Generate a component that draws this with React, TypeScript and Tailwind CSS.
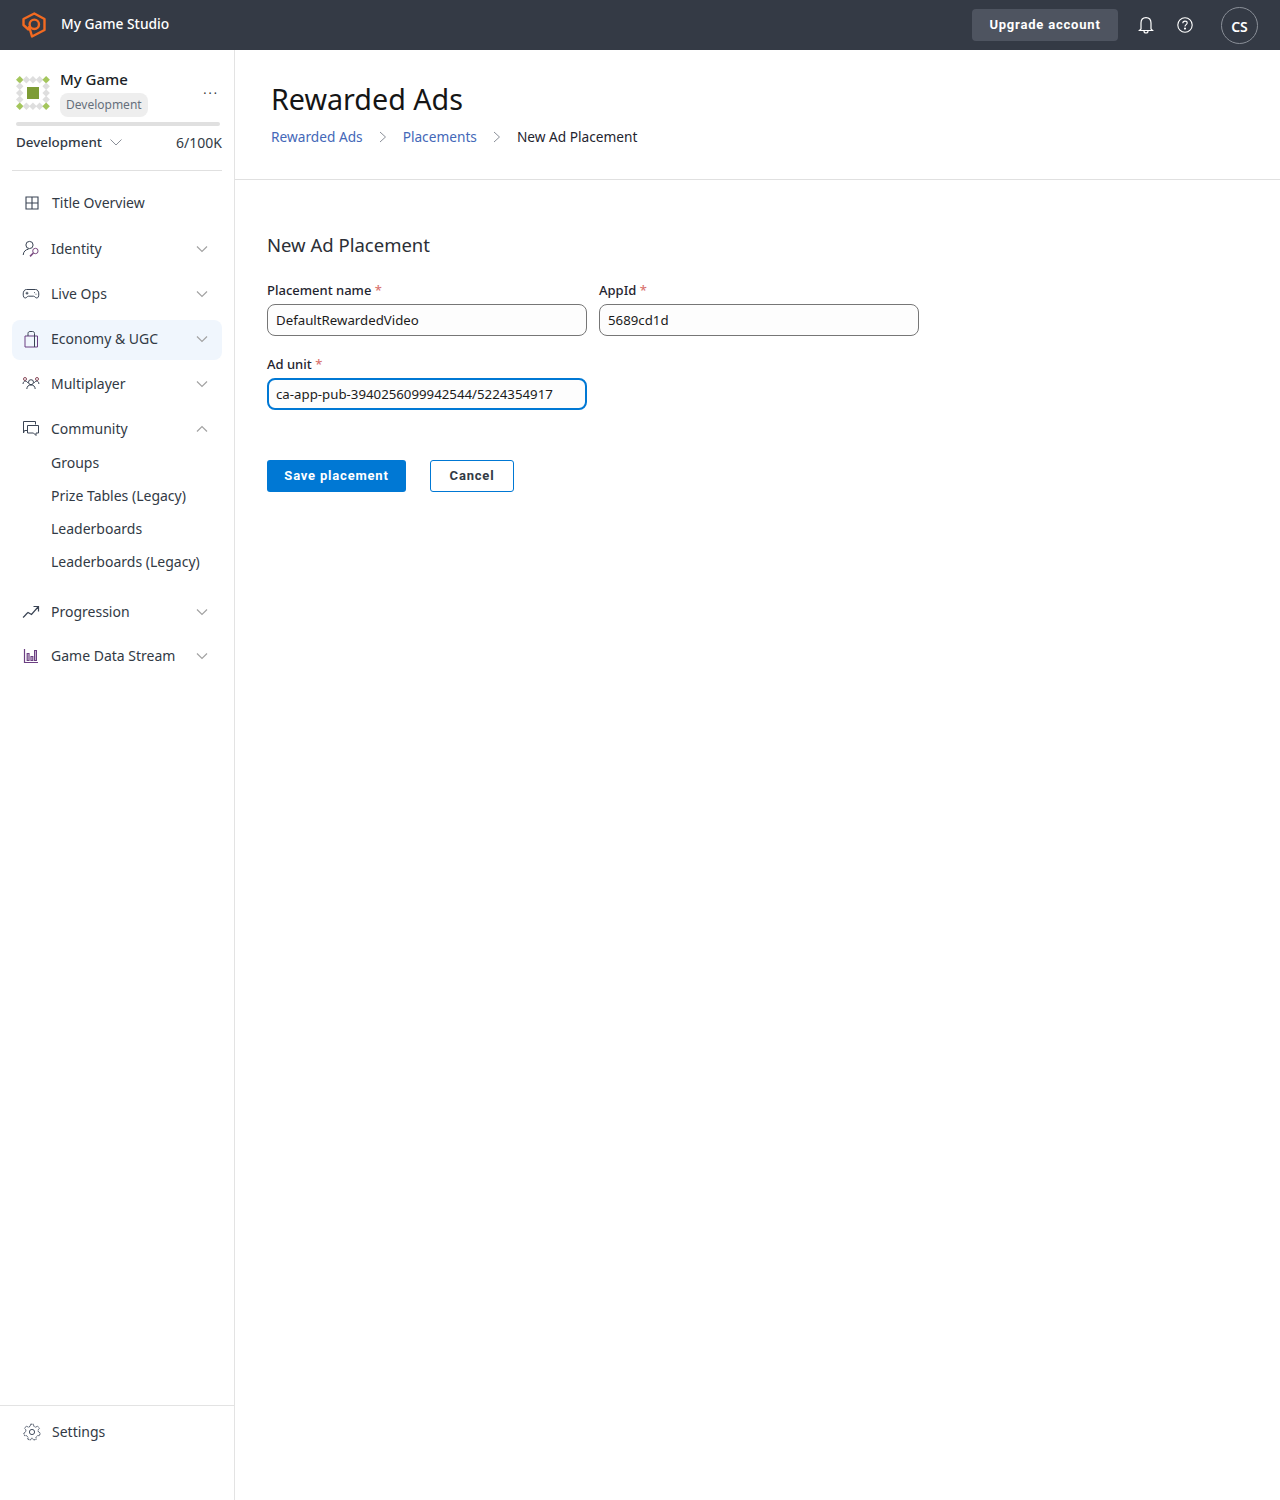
import React from "react";

const font = "font-['Noto_Sans',sans-serif]";
const btnFont = "font-['Roboto',sans-serif]";

function Chevron({ up = false }: { up?: boolean }) {
  return (
    <svg width="12" height="8" viewBox="0 0 12 8" fill="none" stroke="#a3a3a3" strokeWidth="1.2">
      <path d={up ? "M1 6.5L6 1.5L11 6.5" : "M1 1.5L6 6.5L11 1.5"} />
    </svg>
  );
}

function Logo() {
  return (
    <svg width="24" height="26" viewBox="0 0 24 26" fill="none" stroke="#f26a21" strokeWidth="2.4" strokeLinejoin="round">
      <path d="M7 18L1.5 13V7L12.3 1.5L22.5 7V18L10 24.5L7 14" />
      <circle cx="12.3" cy="12.3" r="4.7" />
    </svg>
  );
}

function GameIcon() {
  const d: [number, number, string][] = [];
  for (let i = 0; i < 5; i++) {
    for (let j = 0; j < 5; j++) {
      if (i > 0 && i < 4 && j > 0 && j < 4) continue;
      const corner = (i === 0 || i === 4) && (j === 0 || j === 4);
      d.push([3.75 + i * 6.6, 3.75 + j * 6.6, corner ? "#a4c65c" : "#dedede"]);
    }
  }
  return (
    <svg width="34" height="34" viewBox="0 0 34 34">
      {d.map(([x, y, c], i) => (
        <path key={i} d={`M${x} ${y - 3.75}L${x + 3.75} ${y}L${x} ${y + 3.75}L${x - 3.75} ${y}Z`} fill={c} />
      ))}
      <rect x="11" y="11" width="12" height="12" fill="#7d9c35" />
    </svg>
  );
}

const iconProps = {
  width: 18,
  height: 18,
  viewBox: "0 0 18 18",
  fill: "none",
  stroke: "#3a4454",
  strokeWidth: 1,
};

const icons: Record<string, React.ReactNode> = {
  overview: (
    <svg {...iconProps} width={14} height={14} viewBox="0 0 14 14" strokeWidth={1.1}>
      <path d="M1 1H13V13H1ZM7 1V13M1 7H13" />
    </svg>
  ),
  identity: (
    <svg {...iconProps}>
      <circle cx="7.5" cy="5" r="3.6" />
      <path d="M1.2 15C1.5 11.5 3.5 9.6 6.5 9.2" />
      <circle cx="13.4" cy="11" r="2.7" stroke="#7a4a80" />
      <path d="M11.4 13L8 16.4" stroke="#7a4a80" strokeWidth="1.6" />
    </svg>
  ),
  liveops: (
    <svg {...iconProps}>
      <path d="M4.5 4.5H13.5C15.6 4.5 16.8 6.4 16.8 9C16.8 11.8 16 13 14.8 13C13.4 13 12.8 11.2 11.5 11.2H6.5C5.2 11.2 4.6 13 3.2 13C2 13 1.2 11.8 1.2 9C1.2 6.4 2.4 4.5 4.5 4.5Z" />
      <path d="M3.6 8.2H6.4M5 6.8V9.6M12 7.6H12.8M13.6 9.2H14.4" />
    </svg>
  ),
  economy: (
    <svg {...iconProps}>
      <path d="M3 6H15.5V17H3Z" stroke="#6b3f82" />
      <path d="M6 6V3.5C6 2.3 6.8 1.5 8 1.5H10.5C11.8 1.5 12.5 2.3 12.5 3.5V17" stroke="#3a4454" />
    </svg>
  ),
  multiplayer: (
    <svg {...iconProps}>
      <circle cx="9" cy="7.2" r="2.5" />
      <path d="M4.8 14C5 11.2 6.5 10 9 10C11.5 10 13 11.2 13.2 14" />
      <circle cx="3" cy="4" r="1.5" stroke="#8a4a5a" />
      <circle cx="15" cy="4" r="1.5" stroke="#8a4a5a" />
      <path d="M1 9C1.2 7 2 6.2 3.4 6.2C4.5 6.2 5.4 6.8 5.8 8M16.9 9C16.8 7 16 6.2 14.6 6.2C13.5 6.2 12.6 6.8 12.2 8" />
    </svg>
  ),
  community: (
    <svg {...iconProps}>
      <path d="M6 10.5H2.5L1.5 13V1.5H13.5V4.5" stroke="#3a4454" />
      <path d="M5.5 5.5H16.5V13H14V15.5L11.5 13H5.5Z" stroke="#3a4454" />
    </svg>
  ),
  progression: (
    <svg {...iconProps}>
      <path d="M1 14.5C3 13 4 11 6 9.5L9.5 11.5L16 4M11.5 3.5H16.5V8.5" strokeWidth="1.2" />
    </svg>
  ),
  stream: (
    <svg {...iconProps} stroke="#6b3f82" strokeWidth={1.2}>
      <path d="M2.5 2V15.5H16M5.2 6.5H7V13.5H5.2ZM9 9.5H10.8V13.5H9ZM12.6 3.5H14.4V13.5H12.6Z" />
    </svg>
  ),
  settings: (
    <svg {...iconProps} stroke="#465062">
      <circle cx="9" cy="9" r="2.6" />
      <path d="M7.6 1.2H10.4L10.9 3.4L12.6 4.2L14.6 3.1L16.4 5.3L15 7L15.4 8.9L17.2 10L16.5 12.6L14.3 12.7L13 14.2L13.2 16.4L10.6 17L9.4 15.2H8.6L7.4 17L4.8 16.4L5 14.2L3.7 12.7L1.5 12.6L0.8 10L2.6 8.9L3 7L1.6 5.3L3.4 3.1L5.4 4.2L7.1 3.4Z" strokeDasharray="1.4 .5" />
    </svg>
  ),
};

type NavProps = {
  icon: string;
  label: string;
  chevron?: "up" | "down";
  active?: boolean;
  className?: string;
};

function NavItem({ icon, label, chevron, active, className = "" }: NavProps) {
  return (
    <div className={`flex h-[40px] items-center rounded-lg pr-[14px] ${active ? "bg-[#f0f6fd] pb-[2px]" : ""} ${className}`}>
      <span className="flex w-[18px] justify-center">{icons[icon]}</span>
      <span className="ml-[11px] flex-1 pb-[2px] text-[14px] text-[#323a45]">{label}</span>
      {chevron && <Chevron up={chevron === "up"} />}
    </div>
  );
}

function Field({ label, value, focused }: { label: string; value: string; focused?: boolean }) {
  return (
    <div className="w-[320px]">
      <div className="mb-[4px] h-[20px] text-[13px] font-medium leading-[20px] text-[#1f2530]">
        {label} <span className="text-[#d9736f]">*</span>
      </div>
      <input
        readOnly
        value={value}
        className={`block h-[32px] w-full rounded-lg bg-[#fdfdfd] text-[13.25px] text-[#1b1b1b] outline-none ${
          focused ? "border-2 border-[#0078d4] px-[7px]" : "border border-[#767676] px-[8px]"
        }`}
      />
    </div>
  );
}

export default function App() {
  return (
    <div className={`flex h-[1500px] flex-col bg-white ${font}`}>
      <header className="flex h-[50px] shrink-0 items-center bg-[#343a45] pl-[22px] pr-[22px]">
        <Logo />
        <span className="ml-[15px] flex-1 pb-[2px] text-[13.8px] font-medium text-white">My Game Studio</span>
        <button className={`-ml-px h-[32px] w-[146px] rounded bg-[#4e5460] text-[13px] font-bold tracking-[0.8px] text-white ${btnFont}`}>
          Upgrade account
        </button>
        <svg className="ml-[20px]" width="16" height="18" viewBox="0 0 16 18" fill="none" stroke="#fff" strokeWidth="1.2">
          <path d="M3 13V7C3 3.8 5 1.6 8 1.6C11 1.6 13 3.8 13 7V13L14.5 14.5H1.5Z" />
          <path d="M6 15C6 16.6 7 17 8 17C9 17 10 16.6 10 15" />
        </svg>
        <svg className="ml-[23px]" width="16" height="16" viewBox="0 0 16 16" fill="none" stroke="#fff" strokeWidth="1.1">
          <circle cx="8" cy="8" r="7.2" />
          <path d="M5.8 6.2C5.8 4.9 6.8 4.1 8 4.1C9.3 4.1 10.2 4.9 10.2 6C10.2 7.6 8 7.6 8 9.4" />
          <circle cx="8" cy="11.6" r=".5" fill="#fff" />
        </svg>
        <div className="ml-[28px] flex h-[37px] w-[37px] items-center justify-center rounded-full border border-[#8a8f98] pt-[3px] text-[14px] font-semibold text-white">
          CS
        </div>
      </header>

      <div className="flex min-h-0 flex-1">
        <aside className="flex w-[235px] shrink-0 flex-col border-r border-[#e3e3e3]">
          <div className="mx-[12px] h-[121px] border-b border-[#e0e0e0]">
            <div className="flex pl-[4px] pt-[18px]">
              <div className="pt-[8px]">
                <GameIcon />
              </div>
              <div className="ml-[10px] flex-1">
                <div className="text-[15px] font-medium leading-[22px] text-[#1b1f27]">My Game</div>
                <span className="mt-[3px] inline-block h-[24px] rounded-lg bg-[#eeeeee] px-[6px] text-[12px] leading-[24px] text-[#66707c]">
                  Development
                </span>
              </div>
              <div className="flex pr-[3px] pt-[16px] tracking-[2px]">
                <span className="text-[12px] leading-[12px] text-[#333]">...</span>
              </div>
            </div>
            <div className="mx-[4px] mt-[5px] h-[4px] w-[204px] rounded-full bg-[#e0e0e0]" />
            <div className="mt-[6px] flex h-[20px] items-center pl-[4px] text-[13.4px] text-[#323a45]">
              <span className="font-medium">Development</span>
              <svg className="ml-[8px]" width="12" height="7" viewBox="0 0 12 7" fill="none" stroke="#8a8f98">
                <path d="M.5 .5L6 6L11.5 .5" />
              </svg>
              <span className="ml-auto text-[14px]">6/100K</span>
            </div>
          </div>

          <nav className="mx-[12px] pt-[12px]">
            <NavItem icon="overview" label="Title Overview" className="mb-[6px] pl-[11px]" />
            <NavItem icon="identity" label="Identity" chevron="down" className="mb-[5px] pl-[10px]" />
            <NavItem icon="liveops" label="Live Ops" chevron="down" className="mb-[6px] pl-[10px]" />
            <NavItem icon="economy" label="Economy & UGC" chevron="down" active className="mb-[4px] pl-[10px]" />
            <NavItem icon="multiplayer" label="Multiplayer" chevron="down" className="mb-[5px] pl-[10px]" />
            <NavItem icon="community" label="Community" chevron="up" className="-mb-[3px] pl-[10px]" />
            <div className="mb-[14px] flex flex-col pl-[39px] text-[14px] leading-[33px] text-[#323a45]">
              <span>Groups</span>
              <span>Prize Tables (Legacy)</span>
              <span>Leaderboards</span>
              <span>Leaderboards (Legacy)</span>
            </div>
            <NavItem icon="progression" label="Progression" chevron="down" className="mb-[4px] pl-[10px]" />
            <NavItem icon="stream" label="Game Data Stream" chevron="down" className="pl-[10px]" />
          </nav>

          <div className="mt-auto h-[95px] border-t border-[#e3e3e3] px-[12px] pt-[6px]">
            <NavItem icon="settings" label="Settings" className="pl-[11px]" />
          </div>
        </aside>

        <main className="flex-1">
          <div className="h-[130px] border-b border-[#e0e0e0] pl-[36px] pt-[29px]">
            <h1 className="text-[28.7px] leading-[40px] text-[#151515]">Rewarded Ads</h1>
            <div className="mt-[8px] flex items-center text-[13.7px] leading-[20px]">
              <span className="text-[#4468b8]">Rewarded Ads</span>
              <svg className="mx-[16px]" width="8" height="12" viewBox="0 0 8 12" fill="none" stroke="#8a8f98">
                <path d="M1 1L6.5 6L1 11" />
              </svg>
              <span className="text-[#4468b8]">Placements</span>
              <svg className="mx-[16px]" width="8" height="12" viewBox="0 0 8 12" fill="none" stroke="#8a8f98">
                <path d="M1 1L6.5 6L1 11" />
              </svg>
              <span className="text-[#1f2530]">New Ad Placement</span>
            </div>
          </div>

          <div className="pl-[32px] pt-[50px]">
            <h2 className="text-[18.5px] leading-[30px] text-[#2b2f36]">New Ad Placement</h2>
            <div className="mt-[20px] flex gap-[12px]">
              <Field label="Placement name" value="DefaultRewardedVideo" />
              <Field label="AppId" value="5689cd1d" />
            </div>
            <div className="mt-[18px]">
              <Field label="Ad unit" value="ca-app-pub-3940256099942544/5224354917" focused />
            </div>
            <div className="mt-[50px] flex gap-[24px]">
              <button className={`h-[32px] w-[139px] rounded-[3px] bg-[#0078d4] text-[13px] font-bold tracking-[0.8px] text-white ${btnFont}`}>
                Save placement
              </button>
              <button className={`h-[32px] w-[84px] rounded-[3px] border border-[#0078d4] bg-white text-[13px] font-bold tracking-[0.8px] text-[#323a45] ${btnFont}`}>
                Cancel
              </button>
            </div>
          </div>
        </main>
      </div>
    </div>
  );
}
